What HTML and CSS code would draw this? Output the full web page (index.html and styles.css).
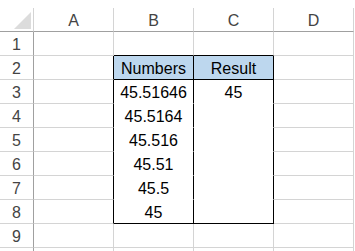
FILE: index.html
```html
<!DOCTYPE html>
<html>
<head>
<meta charset="utf-8">
<link rel="stylesheet" href="styles.css">
</head>
<body>
<div class="sheet">
  <div class="cell corner"><svg class="tri" width="17" height="17" viewBox="0 0 17 17"><polygon points="17,0 17,17 0,17" fill="#dcdcdc"/></svg></div>
  <div class="cell colh">A</div>
  <div class="cell colh">B</div>
  <div class="cell colh">C</div>
  <div class="cell colh">D</div>

  <div class="cell rowh">1</div>
  <div class="cell"></div>
  <div class="cell bb"></div>
  <div class="cell bb"></div>
  <div class="cell"></div>

  <div class="cell rowh">2</div>
  <div class="cell br"></div>
  <div class="cell head br bb">Numbers</div>
  <div class="cell head br bb">Result</div>
  <div class="cell"></div>

  <div class="cell rowh">3</div>
  <div class="cell br"></div>
  <div class="cell box br">45.51646</div>
  <div class="cell box br">45</div>
  <div class="cell"></div>

  <div class="cell rowh">4</div>
  <div class="cell br"></div>
  <div class="cell box br">45.5164</div>
  <div class="cell box br"></div>
  <div class="cell"></div>

  <div class="cell rowh">5</div>
  <div class="cell br"></div>
  <div class="cell box br">45.516</div>
  <div class="cell box br"></div>
  <div class="cell"></div>

  <div class="cell rowh">6</div>
  <div class="cell br"></div>
  <div class="cell box br">45.51</div>
  <div class="cell box br"></div>
  <div class="cell"></div>

  <div class="cell rowh">7</div>
  <div class="cell br"></div>
  <div class="cell box br">45.5</div>
  <div class="cell box br"></div>
  <div class="cell"></div>

  <div class="cell rowh">8</div>
  <div class="cell br"></div>
  <div class="cell box br bb">45</div>
  <div class="cell box br bb"></div>
  <div class="cell"></div>

  <div class="cell rowh">9</div>
  <div class="cell"></div>
  <div class="cell"></div>
  <div class="cell"></div>
  <div class="cell"></div>

  <div class="cell rowh tail"></div>
  <div class="cell tail"></div>
  <div class="cell tail"></div>
  <div class="cell tail"></div>
  <div class="cell tail"></div>
</div>
</body>
</html>
```

FILE: styles.css
```css
html, body {
  margin: 0;
  padding: 0;
  background: #ffffff;
  overflow: hidden;
}
body {
  padding-top: 8px;
  font-family: "Liberation Sans", Arial, sans-serif;
  font-size: 16px;
  color: #000000;
}
.sheet {
  display: grid;
  grid-template-columns: 34px 80px 80px 80px 80px;
  grid-template-rows: repeat(10, 24px) 3px;
}
.cell {
  box-sizing: border-box;
  border-right: 1px solid #d4d4d4;
  border-bottom: 1px solid #d4d4d4;
  line-height: 25px;
  text-align: center;
  white-space: nowrap;
  overflow: visible;
}
.tail {
  border-bottom: 0;
}
.corner {
  position: relative;
  border-bottom-color: #a0a0a0;
}
.tri {
  position: absolute;
  left: 14px;
  top: 4px;
}
.colh {
  color: #444444;
  border-bottom-color: #a0a0a0;
}
.rowh {
  color: #444444;
  border-right-color: #a0a0a0;
}
.head {
  background: #bdd7ee;
}
.box {
  border-bottom-color: #ffffff;
}
.br {
  border-right-color: #000000;
}
.bb {
  border-bottom-color: #000000;
}
```
